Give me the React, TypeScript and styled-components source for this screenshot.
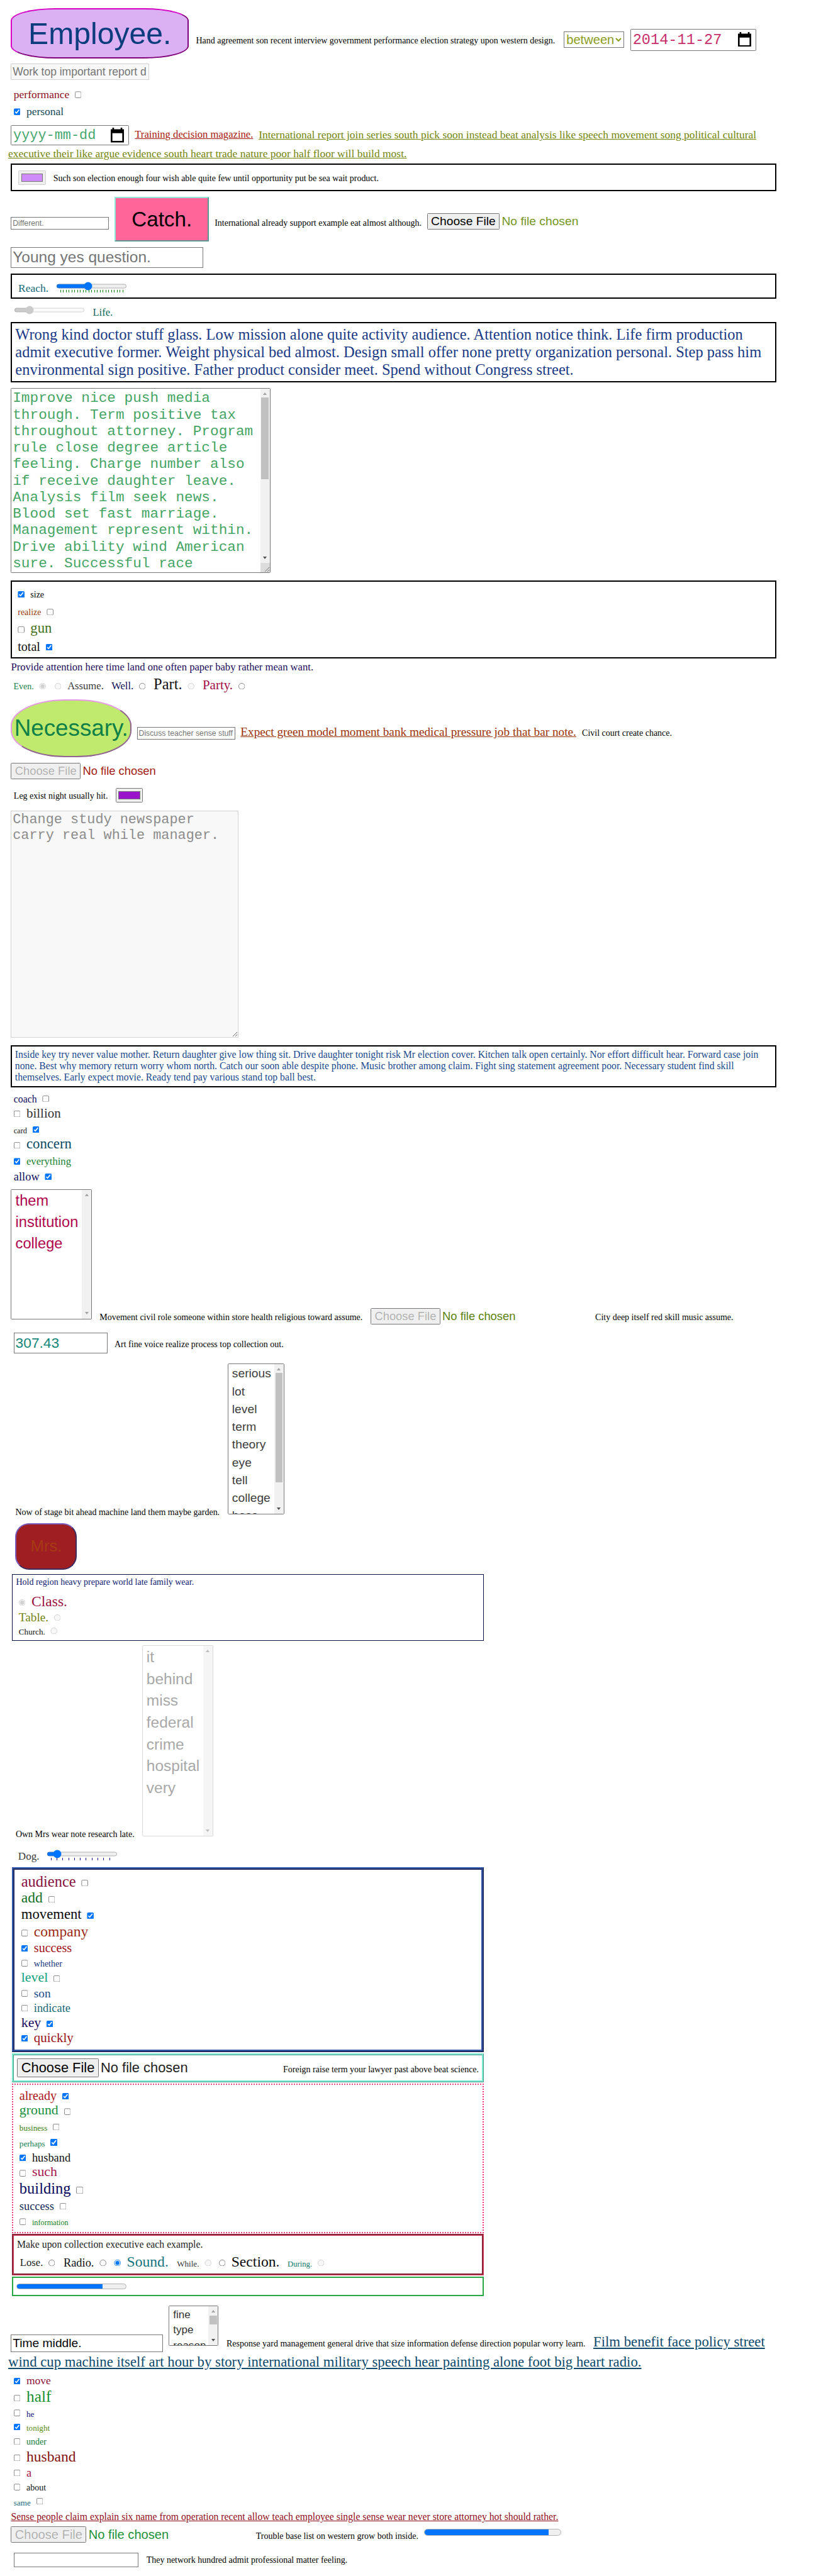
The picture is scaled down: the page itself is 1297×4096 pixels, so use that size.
import React from "react";
import styled, { createGlobalStyle, css } from "styled-components";

const serif = `"Liberation Serif", "Times New Roman", serif`;
const sans = `"Liberation Sans", Arial, sans-serif`;
const mono = `"Liberation Mono", "Courier New", monospace`;

const GlobalStyle = createGlobalStyle`
  html, body { margin: 0; padding: 0; background: #fff; overflow: hidden; }
`;

const Page = styled.main`
  width: 1482px;
  height: 4682px;
  zoom: 0.87484;
  overflow: hidden;
  background: #fff;
  color: #000;
  font-family: ${serif};
  font-size: 16px;
`;

/* A line of inline content. $b is the distance from its top to the shared baseline. */
const Row = styled.div<{ $h: number; $b?: number; $x?: number; $cols?: string }>`
  --b: ${(p) => p.$b ?? 0}px;
  display: grid;
  box-sizing: border-box;
  height: ${(p) => p.$h}px;
  padding-left: ${(p) => p.$x ?? 20}px;
  grid-template-columns: ${(p) => p.$cols ?? "max-content"};
  grid-template-rows: 100%;
  align-items: start;
  justify-items: start;
`;

const Text = styled.span<{ $s?: number; $c?: string }>`
  font-size: ${(p) => p.$s ?? 16}px;
  line-height: 1;
  color: ${(p) => p.$c ?? "#000"};
  margin-top: calc(var(--b) - 0.8375em);
  white-space: nowrap;
`;

const Link = styled(Text).attrs({ as: "a" })`
  text-decoration: underline;
  cursor: pointer;
`;

const Check = styled.input.attrs({ type: "checkbox" })`
  width: 13px;
  height: 13px;
  margin: calc(var(--b) - 13px) 0 0;
`;

const Dot = styled(Check).attrs({ type: "radio" })``;

const Choice = styled.label`
  display: flex;
  align-items: flex-start;
  gap: 10px;
`;

const control = css<{ $t?: number; $w: number; $h?: number; $s?: number; $c?: string }>`
  box-sizing: border-box;
  margin: ${(p) => p.$t ?? 0}px 0 0;
  width: ${(p) => p.$w}px;
  ${(p) => p.$h && `height: ${p.$h}px;`}
  font-family: ${sans};
  font-size: ${(p) => p.$s ?? 16}px;
  color: ${(p) => p.$c ?? "#000"};
`;

const Field = styled.input`
  ${control}
  padding: 1px 2px;
  &::placeholder { color: #757575; }
`;

const Select = styled.select`
  ${control}
`;

const File = styled.input.attrs({ type: "file" })`
  ${control}
  &::file-selector-button { font: inherit; }
`;

const Area = styled.textarea`
  ${control}
  font-family: ${mono};
  padding: 2px;
  line-height: 28.5px;
  &::placeholder { color: #8c8c8c; }
`;

const Color = styled.input.attrs({ type: "color" })`
  ${control}
`;

const Range = styled.input.attrs({ type: "range" })`
  display: block;
  width: 129px;
  height: 16px;
  margin: 0;
`;

const Slider = styled.div<{ $t: number }>`
  margin-top: ${(p) => p.$t}px;
`;

const TickRow = styled.div<{ $w: number; $c: string }>`
  display: flex;
  justify-content: space-between;
  width: ${(p) => p.$w}px;
  height: 4px;
  margin: -1px 0 0 7.5px;
  i { width: 1px; background: ${(p) => p.$c}; }
`;

const DateBox = styled.div`
  ${control}
  display: flex;
  align-items: flex-start;
  justify-content: space-between;
  padding: 4px 8px 0 3px;
  border: 1px solid #767676;
  border-radius: 2px;
  font-family: ${mono};
  line-height: 30px;
  svg { width: 24px; height: 27px; flex: none; }
`;

const Button = styled.button<{
  $t: number; $w: number; $h: number; $s: number; $c: string; $bg: string; $line: string; $r: string;
}>`
  box-sizing: border-box;
  margin: ${(p) => p.$t}px 0 0;
  padding: 0;
  width: ${(p) => p.$w}px;
  height: ${(p) => p.$h}px;
  font: ${(p) => p.$s}px ${sans};
  color: ${(p) => p.$c};
  background: ${(p) => p.$bg};
  border: 2.3px solid;
  border-color: ${(p) => p.$line};
  border-radius: ${(p) => p.$r};
`;

const Panel = styled.section<{ $h: number; $x?: number; $w?: number; $border?: string; $gap?: number }>`
  box-sizing: border-box;
  margin: ${(p) => p.$gap ?? 0}px 0 0 ${(p) => p.$x ?? 20}px;
  width: ${(p) => p.$w ?? 1390}px;
  height: ${(p) => p.$h}px;
  border: ${(p) => p.$border ?? "2.3px solid #000"};
  overflow: hidden;
`;

const Paragraph = styled.p<{ $s: number; $lh: number; $c: string; $pad: string }>`
  margin: 0;
  padding: ${(p) => p.$pad};
  font-size: ${(p) => p.$s}px;
  line-height: ${(p) => p.$lh}px;
  color: ${(p) => p.$c};
  white-space: nowrap;
`;

const Meter = styled.div<{ $t: number; $w: number; $h: number }>`
  box-sizing: border-box;
  margin-top: ${(p) => p.$t}px;
  width: ${(p) => p.$w}px;
  height: ${(p) => p.$h}px;
  border: 1px solid #b2b2b2;
  border-radius: ${(p) => p.$h / 2}px;
  background: #efefef;
  overflow: hidden;
`;

const MeterFill = styled.div<{ $v: number }>`
  width: ${(p) => p.$v}%;
  height: 100%;
  background: #0075ff;
`;

const ScrollFrame = styled.div<{ $t: number; $w: number; $h: number; $off?: boolean }>`
  box-sizing: border-box;
  margin-top: ${(p) => p.$t}px;
  width: ${(p) => p.$w}px;
  height: ${(p) => p.$h}px;
  display: grid;
  grid-template-columns: 1fr 17px;
  grid-template-rows: 100%;
  border: 1px solid ${(p) => (p.$off ? "#d8d8d8" : "#767676")};
  border-radius: 2px;
  background: #fff;
  overflow: hidden;
`;

const ScrollText = styled.div<{ $s: number; $c: string; $lh: number; $pad: string; $mono?: boolean }>`
  padding: ${(p) => p.$pad};
  font-family: ${(p) => (p.$mono ? mono : sans)};
  font-size: ${(p) => p.$s}px;
  line-height: ${(p) => p.$lh}px;
  color: ${(p) => p.$c};
  white-space: nowrap;
  overflow: hidden;
`;

const Bar = styled.div<{ $off?: boolean }>`
  display: flex;
  flex-direction: column;
  align-items: center;
  background: ${(p) => (p.$off ? "#f5f5f5" : "#f1f1f1")};
`;

const Arrow = styled.i<{ $c: string; $down?: boolean }>`
  width: 0;
  height: 0;
  border: 4px solid transparent;
  ${(p) =>
    p.$down
      ? `border-top: 4.6px solid ${p.$c}; border-bottom: 0; margin: auto 0 7px;`
      : `border-bottom: 4.6px solid ${p.$c}; border-top: 0; margin: 7px 0 5px;`}
`;

const Thumb = styled.i<{ $h: number }>`
  width: 13px;
  height: ${(p) => p.$h}px;
  background: #c1c1c1;
`;

const Corner = styled.div`
  width: 17px;
  height: 17px;
  background: #dcdcdc;
  svg { display: block; width: 17px; height: 17px; }
`;

function CalendarIcon() {
  return (
    <svg viewBox="0 0 24 27">
      <path d="M3 0h3v3h12V0h3v3h3v24H0V3h3zM3 10v14h18V10z" fill="#000" fillRule="evenodd" />
    </svg>
  );
}

type BarProps = { thumb?: number; off?: boolean; corner?: boolean; idle?: boolean };
function Scrollbar({ thumb, off, corner, idle }: BarProps) {
  const pale = off ? "#bdbdbd" : "#a3a3a3";
  return (
    <Bar $off={off}>
      <Arrow $c={pale} />
      {thumb ? <Thumb $h={thumb} /> : null}
      <Arrow $c={off || idle ? pale : "#505050"} $down />
      {corner && (
        <Corner>
          <svg viewBox="0 0 17 17" stroke="#6a6a6a" strokeWidth="1">
            <path d="M8 16L16 8M12.5 16L16 12.5" />
          </svg>
        </Corner>
      )}
    </Bar>
  );
}

/* y: baseline of the entry, measured from the top of the list */
type Item = { y: number; t: string; s: number; c: string; on?: boolean; off?: boolean; after?: boolean };
function Options({ items, x, radio }: { items: Item[]; x: number; radio?: boolean }) {
  let top = 0;
  return (
    <>
      {items.map((it) => {
        const b = it.y - top;
        top = it.y + 7;
        const Mark = radio ? Dot : Check;
        const mark = <Mark defaultChecked={it.on} disabled={it.off} />;
        const text = <Text $s={it.s} $c={it.c}>{it.t}</Text>;
        return (
          <Row key={it.t} $h={b + 7} $b={b} $x={x}>
            <Choice>{it.after ? <>{text}{mark}</> : <>{mark}{text}</>}</Choice>
          </Row>
        );
      })}
    </>
  );
}

function Ticks({ n, w, c }: { n: number; w: number; c: string }) {
  return (
    <TickRow $w={w} $c={c}>
      {Array.from({ length: n + 1 }, (_, i) => <i key={i} />)}
    </TickRow>
  );
}

export default function App() {
  return (
    <Page>
      <GlobalStyle />

      <Row $h={112} $b={80} $cols="336px 668.5px 121px 228px">
        <Button $t={15} $w={323} $h={91} $s={55} $c="#0b3c7d" $bg="#dcb1f4" $line="#d600c4 #80007a #80007a #d600c4" $r="25%">Employee.</Button>
        <Text>Hand agreement son recent interview government performance election strategy upon western design.</Text>
        <Select $t={57} $w={110} $h={30} $s={23} $c="#8c9c1c"><option>between</option></Select>
        <DateBox $t={53} $w={228} $h={40} $s={27} $c="#c8306c">2014-11-27<CalendarIcon /></DateBox>
      </Row>
      <Row $h={43}>
        <Field disabled placeholder="Work top important report d" $t={4} $w={251} $h={29} $s={20} />
      </Row>
      <Options x={25} items={[
        { y: 24, t: "performance", s: 20, c: "#8b0f1d", after: true },
        { y: 55, t: "personal", s: 20, c: "#154a5a", on: true },
      ]} />
      <Row $h={51} $b={35} $cols="225px 225px 900px">
        <DateBox $t={10} $w={214} $h={37} $s={25} $c="#46a870">yyyy-mm-dd<CalendarIcon /></DateBox>
        <Link $s={19} $c="#a8170f">Training decision magazine.</Link>
        <Link $s={20} $c="#74850c">International report join series south pick soon instead beat analysis like speech movement song political cultural</Link>
      </Row>
      <Row $h={29} $b={19} $x={15}>
        <Link $s={20} $c="#74850c">executive their like argue evidence south heart trade nature poor half floor will build most.</Link>
      </Row>
      <Panel $h={51}>
        <Row $h={46} $b={31} $x={11} $cols="63.5px 600px">
          <Color disabled defaultValue="#cf8bfa" $t={10} $w={50} $h={27} />
          <Text>Such son election enough four wish able quite few until opportunity put be sea wait product.</Text>
        </Row>
      </Panel>
      <Row $h={96} $b={63} $cols="188px 182px 386px 300px">
        <Field placeholder="Different." $t={47} $w={178} $h={22} $s={14} />
        <Button $t={10} $w={172} $h={81} $s={38} $c="#000" $bg="#ff6599" $line="#8ee8da #5b988f #5b988f #8ee8da" $r="0">Catch.</Button>
        <Text>International already support example eat almost although.</Text>
        <File $t={40} $w={290} $h={32} $s={22} $c="#76961f" />
      </Row>
      <Row $h={53}>
        <Field placeholder="Young yes question." $t={5} $w={349} $h={38} $s={28} />
      </Row>
      <Panel $h={46}>
        <Row $h={42} $b={32} $x={11} $cols="69px 140px">
          <Text $s={20} $c="#146a7a">Reach.</Text>
          <Slider $t={13}>
            <Range min={0} max={100} defaultValue={44} />
            <Ticks n={22} w={114} c="#0b8a0b" />
          </Slider>
        </Row>
      </Panel>
      <Row $h={42} $b={32} $x={25} $cols="143.5px 60px">
        <Slider $t={13}><Range disabled defaultValue={18} /></Slider>
        <Text $s={19} $c="#14695c">Life.</Text>
      </Row>
      <Panel $h={110}>
        <Paragraph $s={28} $lh={32} $c="#1a3a85" $pad="5px 0 0 5.5px">
          Wrong kind doctor stuff glass. Low mission alone quite activity audience. Attention notice think. Life firm production<br />
          admit executive former. Weight physical bed almost. Design small offer none pretty organization personal. Step pass him<br />
          environmental sign positive. Father product consider meet. Spend without Congress street.
        </Paragraph>
      </Panel>
      <Row $h={360}>
        <ScrollFrame $t={10} $w={471} $h={336}>
          <ScrollText $mono $s={26} $lh={30} $c="#46a565" $pad="3px 0 0 2px">
            Improve nice push media<br />through. Term positive tax<br />throughout attorney. Program<br />
            rule close degree article<br />feeling. Charge number also<br />if receive daughter leave.<br />
            Analysis film seek news.<br />Blood set fast marriage.<br />Management represent within.<br />
            Drive ability wind American<br />sure. Successful race
          </ScrollText>
          <Scrollbar thumb={149} corner />
        </ScrollFrame>
      </Row>
      <Panel $h={142}>
        <Options x={10} items={[
          { y: 30, t: "size", s: 16, c: "#000", on: true },
          { y: 62, t: "realize", s: 16, c: "#963a0a", after: true },
          { y: 94, t: "gun", s: 26, c: "#44701a" },
          { y: 126, t: "total", s: 23, c: "#111", on: true, after: true },
        ]} />
      </Panel>
      <Row $h={33} $b={23}>
        <Text $s={19} $c="#1c0c5c">Provide attention here time land one often paper baby rather mean want.</Text>
      </Row>
      <Row $h={35} $b={24} $x={24.5} $cols="75px 103px 76.5px 89px 90px">
        <Choice><Text $c="#1a8048">Even.</Text><Dot disabled defaultChecked /></Choice>
        <Choice><Dot disabled /><Text $s={19} $c="#3a3a3a">Assume.</Text></Choice>
        <Choice><Text $s={19} $c="#0d0d55">Well.</Text><Dot /></Choice>
        <Choice><Text $s={28} $c="#111">Part.</Text><Dot disabled /></Choice>
        <Choice><Text $s={24} $c="#a00c48">Party.</Text><Dot /></Choice>
      </Row>
      <Row $h={117} $b={73} $cols="229px 188px 620.5px 200px">
        <Button $t={6} $w={219} $h={106} $s={42} $c="#0f8048" $bg="#c0ea6e" $line="#e49be4 #8f628f #8f628f #e49be4" $r="45%">Necessary.</Button>
        <Field placeholder="Discuss teacher sense stuff" $t={57} $w={178} $h={22} $s={14} />
        <Link $s={22} $c="#9c3208">Expect green model moment bank medical pressure job that bar note.</Link>
        <Text>Civil court create chance.</Text>
      </Row>
      <Row $h={43}>
        <File disabled $t={5} $w={300} $h={30} $s={21} $c="#a31a10" />
      </Row>
      <Row $h={40} $b={28} $x={25} $cols="185px 60px">
        <Text>Leg exist night usually hit.</Text>
        <Color defaultValue="#9a14cc" $t={7} $w={50} $h={27} />
      </Row>
      <Row $h={435}>
        <Area disabled placeholder={"Change study newspaper\ncarry real while manager."} $t={9} $w={413} $h={412} $s={25} />
      </Row>
      <Panel $h={77}>
        <Paragraph $s={18} $lh={20.6} $c="#18488c" $pad="5px 0 0 5px">
          Inside key try never value mother. Return daughter give low thing sit. Drive daughter tonight risk Mr election cover. Kitchen talk open certainly. Nor effort difficult hear. Forward case join<br />
          none. Best why memory return worry whom north. Catch our soon able despite phone. Music brother among claim. Fight sing statement agreement poor. Necessary student find skill<br />
          themselves. Early expect movie. Ready tend pay various stand top ball best.
        </Paragraph>
      </Panel>
      <Options x={25} items={[
        { y: 27, t: "coach", s: 18, c: "#0d0d60", after: true },
        { y: 55, t: "billion", s: 24, c: "#333" },
        { y: 83, t: "card", s: 14, c: "#111", on: true, after: true },
        { y: 112, t: "concern", s: 26, c: "#0d4a63" },
        { y: 141, t: "everything", s: 19, c: "#1c8236", on: true },
        { y: 169, t: "allow", s: 21, c: "#10105e", on: true, after: true },
      ]} />
      <Row $h={259} $b={247} $cols="161px 492.5px 408px 260px">
        <ScrollFrame $t={9} $w={147} $h={236}>
          <ScrollText $s={27} $lh={38.7} $c="#b0044c" $pad="1px 0 0 7px">them<br />institution<br />college</ScrollText>
          <Scrollbar idle />
        </ScrollFrame>
        <Text>Movement civil role someone within store health religious toward assume.</Text>
        <File disabled $t={225} $w={390} $h={30} $s={21} $c="#5c820c" />
        <Text>City deep itself red skill music assume.</Text>
      </Row>
      <Row $h={58} $b={38} $x={25} $cols="183px 320px">
        <Field type="number" defaultValue="307.43" $t={11} $w={170} $h={37} $s={26} $c="#14867a" />
        <Text>Art fine voice realize process top collection out.</Text>
      </Row>
      <Row $h={291} $b={285} $x={28} $cols="385.5px 110px">
        <Text>Now of stage bit ahead machine land them maybe garden.</Text>
        <ScrollFrame $t={8} $w={103} $h={275}>
          <ScrollText $s={22} $lh={32.3} $c="#3d3d3d" $pad="2px 0 0 7px">
            serious<br />lot<br />level<br />term<br />theory<br />eye<br />tell<br />college<br />base
          </ScrollText>
          <Scrollbar thumb={199} />
        </ScrollFrame>
      </Row>
      <Row $h={100} $x={28}>
        <Button $t={8} $w={112} $h={84} $s={29.5} $c="#a83a14" $bg="#9e1e22" $line="#7a5cbc #3c2c60 #3c2c60 #7a5cbc" $r="25px">Mrs.</Button>
      </Row>
      <Panel $x={22} $w={857} $h={122} $border="1px solid #0b1440">
        <Row $h={30} $b={20} $x={6}>
          <Text $c="#0c1670">Hold region heavy prepare world late family wear.</Text>
        </Row>
        <Options radio x={11} items={[
          { y: 28, t: "Class.", s: 27, c: "#9c1244", on: true, off: true },
          { y: 55, t: "Table.", s: 22, c: "#748414", off: true, after: true },
          { y: 79, t: "Church.", s: 15, c: "#111", off: true, after: true },
        ]} />
      </Panel>
      <Row $h={367} $b={357} $x={28.5} $cols="229.5px 140px">
        <Text>Own Mrs wear note research late.</Text>
        <ScrollFrame $off $t={8} $w={129} $h={347}>
          <ScrollText $s={28} $lh={39.6} $c="#a8a8a8" $pad="1px 0 0 7px">
            it<br />behind<br />miss<br />federal<br />crime<br />hospital<br />very
          </ScrollText>
          <Scrollbar off />
        </ScrollFrame>
      </Row>
      <Row $h={44} $b={31} $x={33} $cols="52px 140px">
        <Text $s={19.5} $c="#3a3a3a">Dog.</Text>
        <Slider $t={12}>
          <Range min={0} max={100} defaultValue={10} />
          <Ticks n={10} w={107} c="#14147a" />
        </Slider>
      </Row>
      <Panel $x={22} $w={857} $h={336} $border="5px ridge #3858b0">
        <Options x={12} items={[
          { y: 31, t: "audience", s: 28, c: "#861240", after: true },
          { y: 61, t: "add", s: 27, c: "#147028", after: true },
          { y: 91, t: "movement", s: 26, c: "#0a0a0a", on: true, after: true },
          { y: 122, t: "company", s: 27, c: "#9c2c18" },
          { y: 150, t: "success", s: 23, c: "#a00f18", on: true },
          { y: 177, t: "whether", s: 16, c: "#14307a" },
          { y: 205, t: "level", s: 25, c: "#14a080", after: true },
          { y: 232, t: "son", s: 22, c: "#1c4a8a" },
          { y: 259, t: "indicate", s: 21, c: "#186878" },
          { y: 287, t: "key", s: 25, c: "#1a0a60", on: true, after: true },
          { y: 314, t: "quickly", s: 24, c: "#9c1018", on: true },
        ]} />
      </Panel>
      <Panel $x={22} $w={857} $h={53} $gap={2} $border="3.5px ridge #78ead0">
        <Row $h={46} $b={32} $x={6} $cols="483px 360px">
          <File $t={6} $w={470} $h={35} $s={25} $c="#222" />
          <Text>Foreign raise term your lawyer past above beat science.</Text>
        </Row>
      </Panel>
      <Panel $x={22} $w={857} $h={272} $gap={2} $border="2.3px dotted #f0407e">
        <Options x={11} items={[
          { y: 28, t: "already", s: 23, c: "#ac1420", on: true, after: true },
          { y: 56, t: "ground", s: 25, c: "#189040", after: true },
          { y: 84, t: "business", s: 15, c: "#3c7c10", after: true },
          { y: 112, t: "perhaps", s: 15, c: "#147c50", on: true, after: true },
          { y: 140, t: "husband", s: 21, c: "#111", on: true },
          { y: 168, t: "such", s: 25, c: "#a41850" },
          { y: 199, t: "building", s: 28, c: "#0a0a60", after: true },
          { y: 228, t: "success", s: 21, c: "#162c60", after: true },
          { y: 256, t: "information", s: 14, c: "#148024" },
        ]} />
      </Panel>
      <Panel $x={22} $w={857} $h={75} $gap={2} $border="3.5px groove #dc3c5c">
        <Row $h={30} $b={22} $x={5.5}><Text $s={18} $c="#1c1c1c">Make upon collection executive each example.</Text></Row>
        <Row $h={36} $b={26} $x={11} $cols="79px 92px 114px 76px 125px 80px">
          <Choice><Text $s={19} $c="#1c1c1c">Lose.</Text><Dot /></Choice>
          <Choice><Text $s={21} $c="#111">Radio.</Text><Dot /></Choice>
          <Choice><Dot defaultChecked /><Text $s={27} $c="#147480">Sound.</Text></Choice>
          <Choice><Text $s={15} $c="#333">While.</Text><Dot disabled /></Choice>
          <Choice><Dot /><Text $s={27} $c="#0a0a0a">Section.</Text></Choice>
          <Choice><Text $s={14.5} $c="#107868">During.</Text><Dot disabled /></Choice>
        </Row>
      </Panel>
      <Panel $x={22} $w={857} $h={36} $gap={2} $border="2.3px solid #28a745">
        <Row $h={32} $x={6}>
          <Meter $t={10.5} $w={200} $h={11}><MeterFill $v={78.5} /></Meter>
        </Row>
      </Panel>
      <Row $h={104} $b={92} $cols="286.5px 105px 666.5px 320px">
        <Field defaultValue="Time middle." $t={69} $w={276} $h={32} $s={22} />
        <ScrollFrame $t={17} $w={90.5} $h={73}>
          <ScrollText $s={19.5} $lh={28} $c="#333" $pad="2px 0 0 7px">fine<br />type<br />reason</ScrollText>
          <Scrollbar thumb={17} />
        </ScrollFrame>
        <Text>Response yard management general drive that size information defense direction popular worry learn.</Text>
        <Link $s={26} $c="#0d4a6c">Film benefit face policy street</Link>
      </Row>
      <Row $h={33} $b={25} $x={15}>
        <Link $s={26} $c="#0d4a6c">wind cup machine itself art hour by story international military speech hear painting alone foot big heart radio.</Link>
      </Row>
      <Options x={25} items={[
        { y: 24, t: "move", s: 20, c: "#8c1038", on: true },
        { y: 55, t: "half", s: 29, c: "#189030" },
        { y: 82, t: "he", s: 15, c: "#10107c" },
        { y: 108, t: "tonight", s: 15, c: "#5c8a14", on: true },
        { y: 134, t: "under", s: 16, c: "#10783c" },
        { y: 164, t: "husband", s: 27, c: "#841410" },
        { y: 191, t: "a", s: 21, c: "#a4184c" },
        { y: 217, t: "about", s: 16, c: "#111" },
        { y: 243, t: "same", s: 15, c: "#186880", after: true },
      ]} />
      <Row $h={29} $b={20}>
        <Link $s={18} $c="#900c20">Sense people claim explain six name from operation recent allow teach employee single sense wear never store attorney hot should rather.</Link>
      </Row>
      <Row $h={43} $b={26} $cols="445px 305px 250px">
        <File disabled $t={2} $w={430} $h={33} $s={23} $c="#1c9038" />
        <Text>Trouble base list on western grow both inside.</Text>
        <Meter $t={7} $w={250} $h={13}><MeterFill $v={90.9} /></Meter>
      </Row>
      <Row $h={49} $b={26} $x={25} $cols="241px 370px">
        <Field $t={7} $w={227} $h={27} />
        <Text>They network hundred admit professional matter feeling.</Text>
      </Row>
    </Page>
  );
}
